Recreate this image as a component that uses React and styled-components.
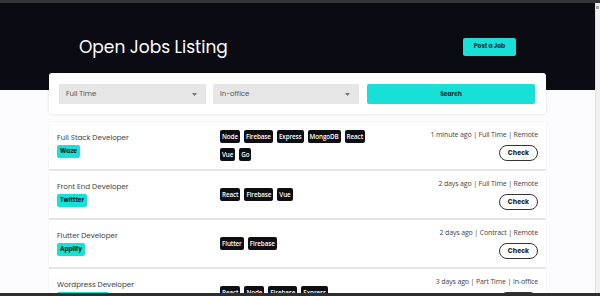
import React from "react";
import styled, { createGlobalStyle } from "styled-components";

const GlobalStyle = createGlobalStyle`
  html, body {
    margin: 0;
    padding: 0;
    overflow: hidden;
    background: #fcfcfe;
  }
  * { box-sizing: border-box; }
`;

const jobs = [
  {
    title: "Full Stack Developer",
    company: "Waze",
    tags: ["Node", "Firebase", "Express", "MongoDB", "React", "Vue", "Go"],
    meta: "1 minute ago | Full Time | Remote",
  },
  {
    title: "Front End Developer",
    company: "Twittter",
    tags: ["React", "Firebase", "Vue"],
    meta: "2 days ago | Full Time | Remote",
  },
  {
    title: "Flutter Developer",
    company: "Applify",
    tags: ["Flutter", "Firebase"],
    meta: "2 days ago | Contract | Remote",
  },
  {
    title: "Wordpress Developer",
    company: "Automattic Inc",
    tags: ["React", "Node", "Firebase", "Express"],
    meta: "3 days ago | Part Time | In-office",
  },
];

function Chevron() {
  return (
    <svg width="5" height="3" viewBox="0 0 5 3">
      <path d="M0 0h5L2.5 3z" fill="#777" />
    </svg>
  );
}

export default function App() {
  return (
    <Frame>
      <GlobalStyle />
      <TopStrip />
      <Body>
        <Main>
          <Header>
            <Title>Open Jobs Listing</Title>
            <PostButton>Post a Job</PostButton>
          </Header>
          <Content>
            <Filters>
              <Select>
                Full Time
                <Chevron />
              </Select>
              <Select>
                In-office
                <Chevron />
              </Select>
              <SearchButton>Search</SearchButton>
            </Filters>
            <List>
              {jobs.map((job) => (
                <Card key={job.title}>
                  <Left>
                    <JobTitle>{job.title}</JobTitle>
                    <Company>{job.company}</Company>
                  </Left>
                  <Tags>
                    {job.tags.map((t) => (
                      <Tag key={t}>{t}</Tag>
                    ))}
                  </Tags>
                  <Right>
                    <Meta>{job.meta}</Meta>
                    <CheckButton>Check</CheckButton>
                  </Right>
                </Card>
              ))}
            </List>
          </Content>
        </Main>
        <Scrollbar>
          <ScrollArrow />
        </Scrollbar>
      </Body>
      <BottomStrip />
    </Frame>
  );
}

const Frame = styled.div`
  width: 600px;
  height: 296px;
  display: flex;
  flex-direction: column;
  overflow: hidden;
`;

const TopStrip = styled.div`
  height: 3px;
  background: #353535;
  flex: none;
`;

const BottomStrip = styled.div`
  height: 3px;
  background: #2e2e2e;
  flex: none;
`;

const Body = styled.div`
  flex: 1;
  display: flex;
  min-height: 0;
`;

const Main = styled.div`
  flex: 1;
  overflow: hidden;
  background: #fcfcfe;
`;

const Scrollbar = styled.div`
  width: 5px;
  background: #f1f1f1;
  border-left: 1px solid #e2e2e2;
  padding-top: 3px;
`;

const ScrollArrow = styled.div`
  width: 3px;
  height: 3px;
  background: #a8a8a8;
`;

const Header = styled.header`
  height: 87px;
  background: #0b0b13;
  display: flex;
  align-items: center;
  justify-content: space-between;
  padding: 0 79px;
`;

const Title = styled.h1`
  margin: 0;
  font-family: "Poppins", "Noto Sans", sans-serif;
  font-weight: 400;
  font-size: 17px;
  color: #fff;
`;

const PostButton = styled.button`
  width: 53px;
  height: 18px;
  border: none;
  border-radius: 2px;
  background: #17e0d6;
  color: #083332;
  font-family: "Poppins", "Noto Sans", sans-serif;
  font-weight: 700;
  font-size: 6px;
  padding: 0;
`;

const Content = styled.div`
  padding: 0 49px;
`;

const Filters = styled.div`
  margin-top: -17px;
  height: 41px;
  background: #fff;
  border-radius: 3px;
  box-shadow: 0 0 3px rgba(0, 0, 0, 0.12);
  display: grid;
  grid-template-columns: 147px 146px 1fr;
  gap: 7px;
  padding: 11px 11px 10px 10px;
`;

const Select = styled.div`
  background: #e6e6e6;
  display: flex;
  align-items: center;
  justify-content: space-between;
  padding: 0 9px 0 7px;
  font-family: "Poppins", "Noto Sans", sans-serif;
  font-size: 7px;
  color: #555;
`;

const SearchButton = styled.button`
  border: none;
  border-radius: 2px;
  background: #17e0d6;
  color: #0a3433;
  font-family: "Poppins", "Noto Sans", sans-serif;
  font-weight: 700;
  font-size: 6px;
  padding: 0;
  margin-left: 1px;
`;

const List = styled.div`
  margin-top: 8px;
  display: flex;
  flex-direction: column;
  gap: 2px;
  background: #ececee;
`;

const Card = styled.div`
  background: #fff;
  display: grid;
  grid-template-columns: 155px 155px 155px;
  gap: 8px;
  align-items: center;
  padding: 8px;
  box-shadow: 0 0 1px rgba(0, 0, 0, 0.15);
`;

const Left = styled.div`
  display: flex;
  flex-direction: column;
  align-items: flex-start;
  gap: 2px;
`;

const JobTitle = styled.div`
  font-family: "Poppins", "Noto Sans", sans-serif;
  font-size: 7.2px;
  line-height: 10px;
  color: #444;
`;

const Company = styled.span`
  background: #17e0d6;
  color: #0a2b2a;
  border-radius: 2px;
  height: 13px;
  padding: 0 3px;
  display: flex;
  align-items: center;
  font-family: "Poppins", "Noto Sans", sans-serif;
  font-weight: 700;
  font-size: 6px;
`;

const Tags = styled.div`
  display: flex;
  flex-wrap: wrap;
  gap: 5px 4px;
`;

const Tag = styled.span`
  background: #0d0d14;
  color: #fff;
  border-radius: 2px;
  height: 13px;
  padding: 0 2px;
  display: flex;
  align-items: center;
  font-family: "Open Sans", sans-serif;
  font-weight: 600;
  font-size: 6.3px;
  letter-spacing: -0.1px;
`;

const Right = styled.div`
  display: flex;
  flex-direction: column;
  align-items: flex-end;
  gap: 5px;
`;

const Meta = styled.div`
  font-family: "Open Sans", sans-serif;
  font-size: 7px;
  line-height: 10px;
  letter-spacing: -0.15px;
  color: #444;
`;

const CheckButton = styled.button`
  width: 39px;
  height: 16px;
  border: 1px solid #333;
  border-radius: 8px;
  background: #fff;
  color: #222;
  font-family: "Poppins", "Noto Sans", sans-serif;
  font-weight: 700;
  font-size: 6.5px;
  padding: 0;
`;
